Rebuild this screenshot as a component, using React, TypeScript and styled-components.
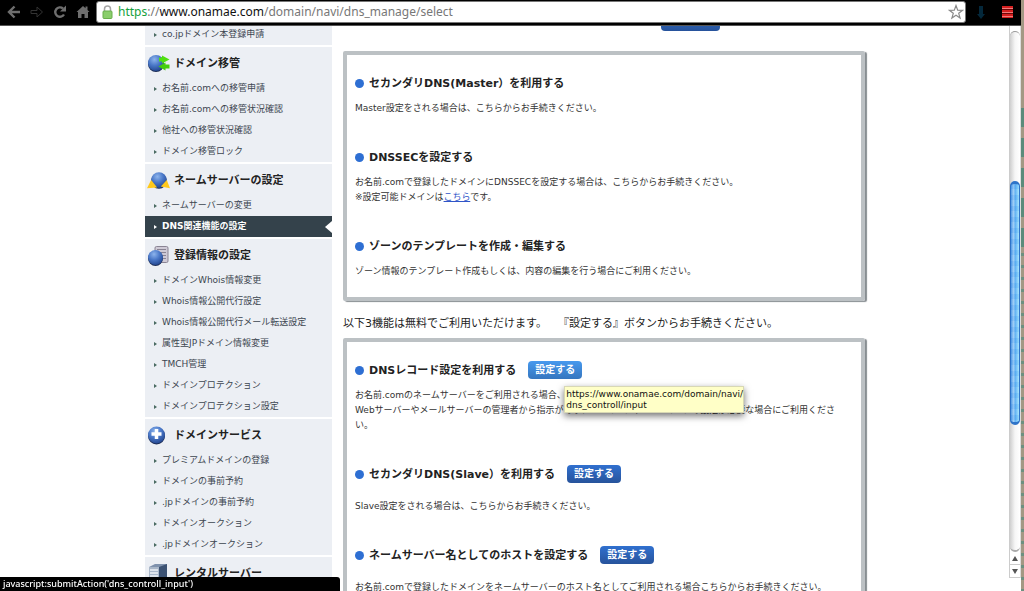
import React from 'react';
import styled, { createGlobalStyle, css } from 'styled-components';

const sans = '"DejaVu Sans", "Noto Sans CJK JP", sans-serif';

const GlobalStyle = createGlobalStyle`
  * { box-sizing: border-box; }
  body {
    margin: 0;
    background: #fff;
    color: #333;
    font-family: ${sans};
    font-size: 9px;
    line-height: 15px;
    text-spacing-trim: space-all;
  }
  h2, h3, p, ul { margin: 0; padding: 0; }
  ul { list-style: none; }
`;

const Screen = styled.div`
  display: flex;
  height: 100vh;
  overflow: hidden;
`;

const Desktop = styled.div`
  flex: none;
  width: 3px;
  display: flex;
  flex-direction: column;
  background: #a39884;
`;

const WideStripes = styled.div`
  flex: none;
  height: 145px;
  margin-top: 108px;
  background: repeating-linear-gradient(#5b8b7b 0 19px, #a39884 19px 30px);
`;

const NarrowStripes = styled.div`
  flex: 1;
  background: repeating-linear-gradient(#6d9080 0 3px, #a39884 3px 12px);
`;

const Browser = styled.div`
  flex: 1;
  min-width: 0;
  display: flex;
  flex-direction: column;
`;

const Toolbar = styled.header`
  flex: none;
  display: flex;
  align-items: flex-start;
  height: 26px;
  background: #000;
  padding: 1px 6px 0 6px;
  border-bottom: 1px solid #555;
`;

const ToolButton = styled.button`
  flex: none;
  display: flex;
  align-items: center;
  justify-content: center;
  width: 16px;
  height: 22px;
  padding: 0;
  border: 0;
  background: none;
`;

const NavButtons = styled.nav`
  display: flex;
  gap: 7px;
  margin-right: 5px;
`;

const AddressBar = styled.form`
  flex: 1;
  min-width: 0;
  display: flex;
  align-items: center;
  height: 22px;
  padding: 0 1px 0 5px;
  gap: 5px;
  background: #fff;
  border: 1px solid #777;
  border-radius: 3px;
`;

const Url = styled.output`
  flex: 1;
  min-width: 0;
  white-space: nowrap;
  overflow: hidden;
  font: 12px/16px "Noto Sans", sans-serif;
  color: #777;
  strong { font-weight: 400; color: #111; }
  span { color: #15a03c; }
`;

const Extensions = styled.div`
  display: flex;
  gap: 10px;
  margin-left: 7px;
`;

const Viewport = styled.div`
  flex: 1;
  min-height: 0;
  display: flex;
  overflow: hidden;
`;

const Scroller = styled.div`
  flex: 1;
  min-width: 0;
  overflow: hidden;
`;

/* The page is shown part-way down its scroll range. */
const Page = styled.div`
  display: flex;
  align-items: flex-start;
  gap: 11px;
  max-width: 725px;
  margin: -2px auto 0;
  padding-left: 3px;
`;

const Sidebar = styled.nav`
  flex: none;
  width: 187px;
`;

const Section = styled.section`
  background: #eceff4;
  & + & { border-top: 2px solid #fff; }
`;

const SectionTitle = styled.h2`
  display: flex;
  align-items: center;
  gap: 4px;
  height: 31px;
  padding: 2px 0 0 2px;
  font-size: 11px;
  font-weight: 700;
  color: #222;
  svg { flex: none; }
`;

const MenuLink = styled.a<{ $active?: boolean }>`
  display: flex;
  align-items: center;
  gap: 5px;
  height: 21px;
  padding-left: 9px;
  color: #3c4650;
  text-decoration: none;
  white-space: nowrap;
  &::before {
    content: '';
    border: 2px solid transparent;
    border-left: 3px solid #4a6a62;
    border-right: 0;
  }
  ${(p) =>
    p.$active &&
    css`
      background: #34424b;
      color: #fff;
      font-weight: 700;
      &::before { border-left-color: #fff; }
      &::after {
        content: '';
        margin-left: auto;
        border: 6px solid transparent;
        border-left: 0;
        border-right: 7px solid #fff;
      }
    `}
`;

const Main = styled.main`
  flex: 1;
  min-width: 0;
  padding-right: 2px;
`;

const Clipped = styled.div`
  display: flex;
  align-items: flex-end;
  justify-content: center;
  height: 7px;
  margin-bottom: 20px;
  padding-left: 172px;
`;

const Box = styled.section`
  padding: 18px 16px 18px 8px;
  border: 4px solid #bcc1c4;
  border-radius: 2px;
  box-shadow: 2px 1px 1px #888e92;
`;

const Entry = styled.article<{ $spacious?: boolean }>`
  & + & { margin-top: 31px; }
  p { margin-top: ${(p) => (p.$spacious ? 15 : 8)}px; }
`;

const EntryHead = styled.div`
  display: flex;
  align-items: center;
  gap: 12px;
  height: 20px;
`;

const EntryTitle = styled.h3`
  display: flex;
  align-items: center;
  gap: 5px;
  font-size: 11px;
  font-weight: 700;
  color: #222;
  white-space: nowrap;
  &::before {
    content: '';
    width: 9px;
    height: 9px;
    border-radius: 50%;
    background: #2e6fd3;
  }
`;

const InlineLink = styled.a`
  color: #2f55c8;
  text-decoration: underline;
`;

const SetButton = styled.button<{ $hover?: boolean; $wide?: boolean }>`
  flex: none;
  width: ${(p) => (p.$wide ? 59 : 54)}px;
  height: 18px;
  padding: 0;
  border: 0;
  border-radius: 4px;
  background: ${(p) =>
    p.$hover ? 'linear-gradient(#4799ee, #3576bf)' : 'linear-gradient(#3070cf, #27539b)'};
  color: #fff;
  font: 700 10px/16px ${sans};
`;

const Notice = styled.p`
  padding: 15px 0 6px;
  font-size: 11px;
  line-height: 16px;
  color: #222;
  white-space: nowrap;
`;

const Anchor = styled.div`
  position: relative;
  height: 18px;
`;

const Tooltip = styled.div`
  position: absolute;
  z-index: 2;
  top: 25px;
  left: 36px;
  width: 180px;
  height: 27px;
  padding: 2px 0 0 1px;
  background: #ffffc7;
  border: 1px solid #d8d8b4;
  box-shadow: 0 3px 7px rgba(0, 0, 0, 0.55);
  font-size: 9px;
  line-height: 11px;
  color: #111;
`;

const Scrollbar = styled.div`
  flex: none;
  width: 12px;
  display: flex;
  flex-direction: column;
  margin-bottom: 13px;
  border-left: 1px solid #ccc;
  border-right: 1px solid #ddd;
`;

const Track = styled.div`
  flex: 1;
  padding-top: 149px;
  margin-top: 5px;
  border-top: 1px solid #999;
  border-bottom: 2px solid #aaa;
  border-radius: 5px;
  background: linear-gradient(90deg, #cfcfcf, #f6f6f6 50%, #fff);
`;

const Thumb = styled.div`
  height: 66%;
  border-radius: 5px;
  border: 1px solid #2f74c8;
  border-top-width: 3px;
  border-bottom-width: 3px;
  background:
    repeating-linear-gradient(rgba(40, 130, 230, 0.1) 0 5px, rgba(255, 255, 255, 0.05) 5px 11px),
    linear-gradient(90deg, #4b95e3, #9cccf6 30%, #5eb0f2 55%, #a5e6ff);
`;

const ArrowButton = styled.button`
  display: flex;
  align-items: center;
  justify-content: center;
  height: 13px;
  padding: 0;
  border: 0;
  border-bottom: 1px solid #ccc;
  background: #fff;
`;

const Status = styled.div`
  position: fixed;
  left: 0;
  bottom: 0;
  z-index: 3;
  width: 340px;
  height: 14px;
  padding-left: 3px;
  border-radius: 0 3px 0 0;
  background: #000;
  color: #fff;
  font: 500 9px/13px "Noto Sans", sans-serif;
`;

const Ball = ({ id, cx, cy, r }: { id: string; cx: number; cy: number; r: number }) => (
  <>
    <defs>
      <radialGradient id={id} cx="40%" cy="28%" r="75%">
        <stop offset="0" stopColor="#8db4ec" />
        <stop offset="0.5" stopColor="#4a78c8" />
        <stop offset="1" stopColor="#23468f" />
      </radialGradient>
    </defs>
    <circle cx={cx} cy={cy + 1} r={r} fill="#1b2c55" />
    <circle cx={cx} cy={cy} r={r} fill={`url(#${id})`} />
  </>
);

const TransferIcon = () => (
  <svg width="23" height="20" viewBox="0 0 23 20">
    <Ball id="transfer" cx={9} cy={9} r={8} />
    <path d="M12 3.500h3V1.500l7.500 4-7.500 4v-2h-3z" fill="#4fe010" />
    <path d="M22.500 10.500h-4v-2l-7 4 7 4v-2h4z" fill="#43cf0c" />
  </svg>
);

const NameServerIcon = () => (
  <svg width="23" height="20" viewBox="0 0 25 20">
    <Ball id="nameserver" cx={13} cy={9} r={8.5} />
    <path d="M0 18l4.500-9 6.500 8z" fill="#ffc91c" />
    <path d="M25 18l-3.500-9-6.500 7z" fill="#ffc91c" />
  </svg>
);

const InfoIcon = () => (
  <svg width="23" height="22" viewBox="0 0 23 22">
    <rect x="8" y="1.500" width="13" height="16" rx="1.500" fill="#cfcad6" stroke="#8a8494" />
    <path d="M10 4.500h9M10 7.500h9M10 10.500h9M10 13.500h9" stroke="#8a8494" />
    <Ball id="info" cx={8.5} cy={12.5} r={7.5} />
  </svg>
);

const PlusIcon = () => (
  <svg width="23" height="20" viewBox="0 0 23 20">
    <Ball id="plus" cx={9.5} cy={9} r={8.5} />
    <path d="M9.500 3v10M4.500 8h10" stroke="#fff" strokeWidth="3.500" />
  </svg>
);

const ServerIcon = () => (
  <svg width="23" height="22" viewBox="0 0 23 22">
    <path d="M2 4l6-3h12v17l-6 4H2z" fill="#7f92ad" />
    <path d="M12 4l8-3v17l-8 4z" fill="#3c5273" />
    <path d="M2 4h10v18H2z" fill="#a9b7c9" />
    <path d="M3 7h8M3 10h8M3 13h8M3 16h8" stroke="#eef2f6" strokeWidth="1.500" />
  </svg>
);

const sections = [
  {
    title: 'ドメイン移管',
    icon: <TransferIcon />,
    items: ['お名前.comへの移管申請', 'お名前.comへの移管状況確認', '他社への移管状況確認', 'ドメイン移管ロック'],
  },
  {
    title: 'ネームサーバーの設定',
    icon: <NameServerIcon />,
    items: ['ネームサーバーの変更', 'DNS関連機能の設定'],
  },
  {
    title: '登録情報の設定',
    icon: <InfoIcon />,
    items: [
      'ドメインWhois情報変更',
      'Whois情報公開代行設定',
      'Whois情報公開代行メール転送設定',
      '属性型JPドメイン情報変更',
      'TMCH管理',
      'ドメインプロテクション',
      'ドメインプロテクション設定',
    ],
  },
  {
    title: 'ドメインサービス',
    icon: <PlusIcon />,
    items: ['プレミアムドメインの登録', 'ドメインの事前予約', '.jpドメインの事前予約', 'ドメインオークション', '.jpドメインオークション'],
  },
  { title: 'レンタルサーバー', icon: <ServerIcon />, items: [] },
];

const activeItem = 'DNS関連機能の設定';

export default function App() {
  return (
    <Screen>
      <GlobalStyle />
      <Browser>
        <Toolbar>
          <NavButtons>
            <ToolButton aria-label="戻る">
              <svg width="14" height="14" viewBox="0 0 14 14">
                <path d="M7.500 1.500L2 7l5.500 5.500M2.500 7H13" fill="none" stroke="#6e6e6e" strokeWidth="2.400" />
              </svg>
            </ToolButton>
            <ToolButton aria-label="進む">
              <svg width="14" height="14" viewBox="0 0 14 14">
                <path d="M1 5.500h6V2l5.500 5L7 12V8.500H1z" fill="none" stroke="#333" strokeWidth="1" />
              </svg>
            </ToolButton>
            <ToolButton aria-label="再読み込み">
              <svg width="14" height="14" viewBox="0 0 14 14">
                <path d="M11 9.500A4.700 4.700 0 1 1 10 3.500" fill="none" stroke="#6e6e6e" strokeWidth="2.400" />
                <path d="M13 0.500v6H7z" fill="#6e6e6e" />
              </svg>
            </ToolButton>
            <ToolButton aria-label="ホーム">
              <svg width="14" height="14" viewBox="0 0 14 14">
                <path d="M7 1l2.500 2.300V1.500h2v3.600L13.500 7H12v6H8.500V9h-3v4H2V7H0.500z" fill="#6e6e6e" />
              </svg>
            </ToolButton>
          </NavButtons>
          <AddressBar>
            <svg width="11" height="14" viewBox="0 0 11 14">
              <path d="M2.500 7V4a3 3 0 0 1 6 0v3" fill="none" stroke="#a5a5a5" strokeWidth="1.500" />
              <rect x="1" y="6" width="9" height="7.500" rx="1" fill="#8bce6c" stroke="#68ae4b" />
            </svg>
            <Url>
              <span>https</span>://<strong>www.onamae.com</strong>/domain/navi/dns_manage/select
            </Url>
            <ToolButton type="button" aria-label="ブックマーク">
              <svg width="16" height="16" viewBox="0 0 16 16">
                <path
                  d="M8 1.500l1.700 4.600 4.900.2-3.900 3 1.400 4.700L8 11.300 3.900 14l1.400-4.700-3.900-3 4.900-.2z"
                  fill="#fff"
                  stroke="#8a8a8a"
                  strokeWidth="1.200"
                />
              </svg>
            </ToolButton>
          </AddressBar>
          <Extensions>
            <ToolButton aria-label="ダウンロード">
              <svg width="8" height="13" viewBox="0 0 8 13">
                <path d="M2 0h4v8h2l-4 5-4-5h2z" fill="#04283b" />
              </svg>
            </ToolButton>
            <ToolButton aria-label="メニュー">
              <svg width="11" height="12" viewBox="0 0 11 12">
                <path d="M0 0h11v12H0z" fill="#d51f1f" />
                <path d="M0 2.500h11M0 6.500h11M0 10.500h11" stroke="#f07c7c" />
                <path d="M0 3.500h11M0 7.500h11" stroke="#6e0808" />
              </svg>
            </ToolButton>
          </Extensions>
        </Toolbar>

        <Viewport>
          <Scroller>
            <Page>
              <Sidebar>
                <Section>
                  <MenuLink href="#">co.jpドメイン本登録申請</MenuLink>
                </Section>
                {sections.map((s) => (
                  <Section key={s.title}>
                    <SectionTitle>
                      {s.icon}
                      {s.title}
                    </SectionTitle>
                    <ul>
                      {s.items.map((item) => (
                        <li key={item}>
                          <MenuLink href="#" $active={item === activeItem}>
                            {item}
                          </MenuLink>
                        </li>
                      ))}
                    </ul>
                  </Section>
                ))}
              </Sidebar>

              <Main>
                <Clipped>
                  <SetButton $wide aria-label="設定する" />
                </Clipped>
                <Box>
                  <Entry>
                    <EntryHead>
                      <EntryTitle>セカンダリDNS(Master）を利用する</EntryTitle>
                    </EntryHead>
                    <p>Master設定をされる場合は、こちらからお手続きください。</p>
                  </Entry>
                  <Entry>
                    <EntryHead>
                      <EntryTitle>DNSSECを設定する</EntryTitle>
                    </EntryHead>
                    <p>
                      お名前.comで登録したドメインにDNSSECを設定する場合は、こちらからお手続きください。
                      <br />
                      ※設定可能ドメインは<InlineLink href="#">こちら</InlineLink>です。
                    </p>
                  </Entry>
                  <Entry>
                    <EntryHead>
                      <EntryTitle>ゾーンのテンプレートを作成・編集する</EntryTitle>
                    </EntryHead>
                    <p>ゾーン情報のテンプレート作成もしくは、内容の編集を行う場合にご利用ください。</p>
                  </Entry>
                </Box>
                <Notice>以下3機能は無料でご利用いただけます。　『設定する』ボタンからお手続きください。</Notice>
                <Box>
                  <Entry>
                    <EntryHead>
                      <EntryTitle>DNSレコード設定を利用する</EntryTitle>
                      <Anchor>
                        <SetButton $hover>設定する</SetButton>
                        <Tooltip role="tooltip">
                          https://www.onamae.com/domain/navi/
                          <br />
                          dns_controll/input
                        </Tooltip>
                      </Anchor>
                    </EntryHead>
                    <p>
                      お名前.comのネームサーバーをご利用される場合、設定が可能です。
                      <br />
                      Webサーバーやメールサーバーの管理者から指示があり、AレコードやMXレコードの設定が必要な場合にご利用ください。
                    </p>
                  </Entry>
                  <Entry $spacious>
                    <EntryHead>
                      <EntryTitle>セカンダリDNS(Slave）を利用する</EntryTitle>
                      <SetButton>設定する</SetButton>
                    </EntryHead>
                    <p>Slave設定をされる場合は、こちらからお手続きください。</p>
                  </Entry>
                  <Entry $spacious>
                    <EntryHead>
                      <EntryTitle>ネームサーバー名としてのホストを設定する</EntryTitle>
                      <SetButton>設定する</SetButton>
                    </EntryHead>
                    <p>お名前.comで登録したドメインをネームサーバーのホスト名としてご利用される場合こちらからお手続きください。</p>
                  </Entry>
                </Box>
              </Main>
            </Page>
          </Scroller>
          <Scrollbar>
            <Track>
              <Thumb />
            </Track>
            <ArrowButton aria-label="上へ">
              <svg width="6" height="5" viewBox="0 0 6 5">
                <path d="M3 0l3 5H0z" fill="#555" />
              </svg>
            </ArrowButton>
            <ArrowButton aria-label="下へ">
              <svg width="6" height="5" viewBox="0 0 6 5">
                <path d="M3 5l3-5H0z" fill="#555" />
              </svg>
            </ArrowButton>
          </Scrollbar>
        </Viewport>
      </Browser>
      <Desktop>
        <WideStripes />
        <NarrowStripes />
      </Desktop>
      <Status>javascript:submitAction('dns_controll_input')</Status>
    </Screen>
  );
}
